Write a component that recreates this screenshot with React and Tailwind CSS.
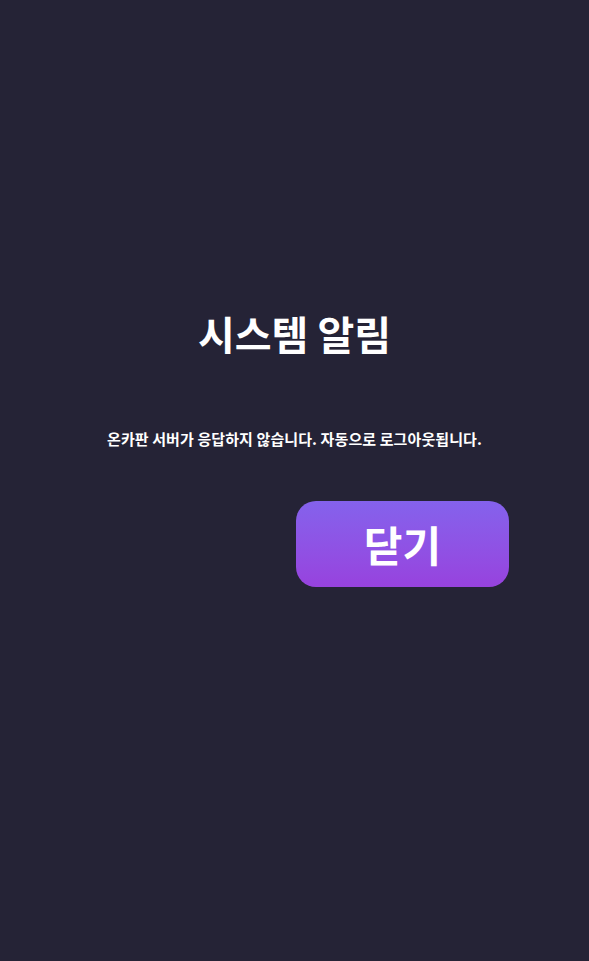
export default function App() {
  return (
    <div
      className="min-h-screen w-full bg-[#252336] flex flex-col items-center"
      style={{ fontFamily: '"Noto Sans CJK KR", "Noto Sans", sans-serif' }}
    >
      <h1 className="mt-[307px] text-[40px] leading-[52px] font-bold text-white">
        시스템 알림
      </h1>
      <p className="mt-[69px] text-[15px] leading-[22px] font-bold text-white tracking-[0.1px]">
        온카판 서버가 응답하지 않습니다. 자동으로 로그아웃됩니다.
      </p>
      <div className="w-full flex justify-end pr-[80px] mt-[51px]">
        <button className="w-[213px] h-[86px] rounded-[20px] bg-gradient-to-b from-[#8462ec] to-[#9742de] text-white text-[42px] font-bold leading-none">
          닫기
        </button>
      </div>
    </div>
  );
}
